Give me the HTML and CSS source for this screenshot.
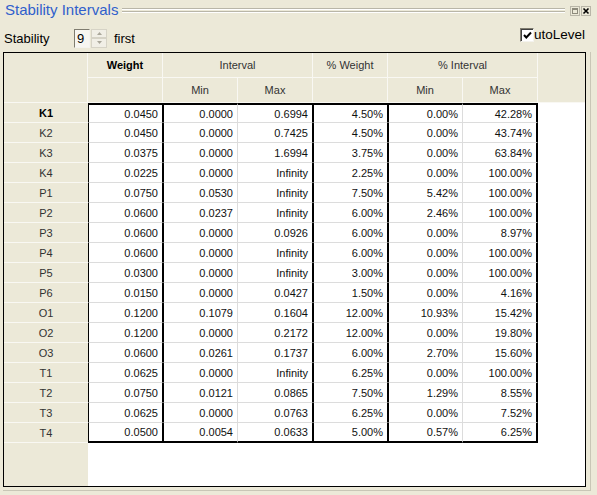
FILE: index.html
```html
<!DOCTYPE html>
<html>
<head>
<meta charset="utf-8">
<link rel="stylesheet" href="styles.css">
</head>
<body>
<div class="window">
  <div class="caption">
    <span class="cap-title">Stability Intervals</span>
    <span class="cap-lines"></span>
    <span class="cap-btn"><svg width="10" height="10" viewBox="0 0 10 10"><rect x="0.5" y="0.5" width="9" height="9" fill="#ece9d8" stroke="#b9b6a8"/><rect x="2.5" y="2.5" width="5" height="5" fill="none" stroke="#8d8a7c"/><line x1="2.5" y1="3.5" x2="7.5" y2="3.5" stroke="#8d8a7c"/></svg></span>
    <span class="cap-btn"><svg width="10" height="10" viewBox="0 0 10 10"><rect x="0.5" y="0.5" width="9" height="9" fill="#ece9d8" stroke="#b9b6a8"/><path d="M2.5 2.5 L7.5 7.5 M7.5 2.5 L2.5 7.5" stroke="#000" stroke-width="1.6"/></svg></span>
  </div>
  <div class="toolbar">
    <span class="tb-label">Stability</span>
    <span class="spin">
      <span class="spin-field">9</span>
      <span class="spin-btns">
        <span class="spin-btn"><svg width="5" height="3" viewBox="0 0 5 3"><path d="M0 3 L2.5 0 L5 3 Z" fill="#aaa79a"/></svg></span>
        <span class="spin-btn"><svg width="5" height="3" viewBox="0 0 5 3"><path d="M0 0 L2.5 3 L5 0 Z" fill="#aaa79a"/></svg></span>
      </span>
    </span>
    <span class="tb-first">first</span>
    <span class="check-wrap">
      <span class="check-box"><svg width="9" height="9" viewBox="0 0 9 9"><path d="M1 4 L3.3 6.5 L8 1.5" fill="none" stroke="#000" stroke-width="2"/></svg></span>
      <span class="check-label">utoLevel</span>
    </span>
  </div>
  <div class="panel">
  <div class="frame">
    <div class="grid">
      <div class="hc corner"></div>
      <div class="hc bold c2">Weight</div>
      <div class="hc span2">Interval</div>
      <div class="hc">% Weight</div>
      <div class="hc span2">% Interval</div>
      <div class="hc hfill"></div>
      <div class="hc"></div>
      <div class="hc">Min</div>
      <div class="hc">Max</div>
      <div class="hc"></div>
      <div class="hc">Min</div>
      <div class="hc">Max</div>

      <div class="rh first bold">K1</div><div class="dc first w">0.0450</div><div class="dc first mn">0.0000</div><div class="dc first mx">0.6994</div><div class="dc first w">4.50%</div><div class="dc first mn">0.00%</div><div class="dc first mx last">42.28%</div><div class="df"></div>
      <div class="rh">K2</div><div class="dc w">0.0450</div><div class="dc mn">0.0000</div><div class="dc mx">0.7425</div><div class="dc w">4.50%</div><div class="dc mn">0.00%</div><div class="dc mx last">43.74%</div><div class="df"></div>
      <div class="rh">K3</div><div class="dc w">0.0375</div><div class="dc mn">0.0000</div><div class="dc mx">1.6994</div><div class="dc w">3.75%</div><div class="dc mn">0.00%</div><div class="dc mx last">63.84%</div><div class="df"></div>
      <div class="rh">K4</div><div class="dc w">0.0225</div><div class="dc mn">0.0000</div><div class="dc mx">Infinity</div><div class="dc w">2.25%</div><div class="dc mn">0.00%</div><div class="dc mx last">100.00%</div><div class="df"></div>
      <div class="rh">P1</div><div class="dc w">0.0750</div><div class="dc mn">0.0530</div><div class="dc mx">Infinity</div><div class="dc w">7.50%</div><div class="dc mn">5.42%</div><div class="dc mx last">100.00%</div><div class="df"></div>
      <div class="rh">P2</div><div class="dc w">0.0600</div><div class="dc mn">0.0237</div><div class="dc mx">Infinity</div><div class="dc w">6.00%</div><div class="dc mn">2.46%</div><div class="dc mx last">100.00%</div><div class="df"></div>
      <div class="rh">P3</div><div class="dc w">0.0600</div><div class="dc mn">0.0000</div><div class="dc mx">0.0926</div><div class="dc w">6.00%</div><div class="dc mn">0.00%</div><div class="dc mx last">8.97%</div><div class="df"></div>
      <div class="rh">P4</div><div class="dc w">0.0600</div><div class="dc mn">0.0000</div><div class="dc mx">Infinity</div><div class="dc w">6.00%</div><div class="dc mn">0.00%</div><div class="dc mx last">100.00%</div><div class="df"></div>
      <div class="rh">P5</div><div class="dc w">0.0300</div><div class="dc mn">0.0000</div><div class="dc mx">Infinity</div><div class="dc w">3.00%</div><div class="dc mn">0.00%</div><div class="dc mx last">100.00%</div><div class="df"></div>
      <div class="rh">P6</div><div class="dc w">0.0150</div><div class="dc mn">0.0000</div><div class="dc mx">0.0427</div><div class="dc w">1.50%</div><div class="dc mn">0.00%</div><div class="dc mx last">4.16%</div><div class="df"></div>
      <div class="rh">O1</div><div class="dc w">0.1200</div><div class="dc mn">0.1079</div><div class="dc mx">0.1604</div><div class="dc w">12.00%</div><div class="dc mn">10.93%</div><div class="dc mx last">15.42%</div><div class="df"></div>
      <div class="rh">O2</div><div class="dc w">0.1200</div><div class="dc mn">0.0000</div><div class="dc mx">0.2172</div><div class="dc w">12.00%</div><div class="dc mn">0.00%</div><div class="dc mx last">19.80%</div><div class="df"></div>
      <div class="rh">O3</div><div class="dc w">0.0600</div><div class="dc mn">0.0261</div><div class="dc mx">0.1737</div><div class="dc w">6.00%</div><div class="dc mn">2.70%</div><div class="dc mx last">15.60%</div><div class="df"></div>
      <div class="rh">T1</div><div class="dc w">0.0625</div><div class="dc mn">0.0000</div><div class="dc mx">Infinity</div><div class="dc w">6.25%</div><div class="dc mn">0.00%</div><div class="dc mx last">100.00%</div><div class="df"></div>
      <div class="rh">T2</div><div class="dc w">0.0750</div><div class="dc mn">0.0121</div><div class="dc mx">0.0865</div><div class="dc w">7.50%</div><div class="dc mn">1.29%</div><div class="dc mx last">8.55%</div><div class="df"></div>
      <div class="rh">T3</div><div class="dc w">0.0625</div><div class="dc mn">0.0000</div><div class="dc mx">0.0763</div><div class="dc w">6.25%</div><div class="dc mn">0.00%</div><div class="dc mx last">7.52%</div><div class="df"></div>
      <div class="rh">T4</div><div class="dc end w">0.0500</div><div class="dc end mn">0.0054</div><div class="dc end mx">0.0633</div><div class="dc end w">5.00%</div><div class="dc end mn">0.57%</div><div class="dc end mx last">6.25%</div><div class="df"></div>

      <div class="rh-rest"></div>
      <div class="d-rest"></div>
    </div>
  </div>
  </div>
</div>
</body>
</html>
```

FILE: styles.css
```css
* { box-sizing: border-box; }
html, body { margin: 0; padding: 0; }
body {
  background: #ece9d8;
  font-family: "Liberation Sans", Arial, sans-serif;
  width: 597px;
  height: 495px;
  overflow: hidden;
}
.window { width: 597px; height: 495px; }

.caption {
  display: flex;
  align-items: center;
  height: 20px;
  padding: 0 6px 0 5px;
}
.cap-title {
  font-size: 15px;
  color: #3060cc;
  line-height: 20px;
  margin-right: 4px;
  margin-top: -1px;
}
.cap-lines {
  flex: 1;
  height: 6px;
  margin-right: 4px;
  margin-top: 1px;
  background: linear-gradient(to bottom,
    #b9b6a8 0, #b9b6a8 1px, #ffffff 1px, #ffffff 2px,
    transparent 2px, transparent 3px,
    #b9b6a8 3px, #b9b6a8 4px, #ffffff 4px, #ffffff 5px, transparent 5px);
}
.cap-btn {
  display: flex;
  width: 10px;
  height: 10px;
  margin-left: 1px;
  margin-top: 2px;
}

.toolbar {
  display: flex;
  align-items: center;
  height: 32px;
  padding: 0 12px 0 4px;
  font-size: 13px;
  color: #000;
}
.tb-label { width: 70px; padding-top: 4px; }
.spin { display: flex; height: 19px; margin-top: 4px; }
.spin-field {
  width: 16px;
  height: 19px;
  border-top: 1px solid #7f7c6f;
  border-left: 1px solid #7f7c6f;
  border-right: 1px solid #f4f3ee;
  border-bottom: 1px solid #f4f3ee;
  background: #f7f6f1;
  font-size: 13px;
  line-height: 17px;
  padding-left: 2px;
}
.spin-btns { display: flex; flex-direction: column; width: 16px; margin-left: 1px; }
.spin-btn {
  flex: 1;
  display: flex;
  align-items: center;
  justify-content: center;
  background: #f1efe6;
  border: 1px solid #d6d3c6;
}
.tb-first { margin-left: 7px; padding-top: 4px; }
.check-wrap {
  margin-left: auto;
  display: flex;
  align-items: center;
  align-self: flex-start;
  margin-top: 7px;
}
.check-box {
  width: 14px;
  height: 14px;
  background: #fff;
  border-top: 1px solid #7f7c6f;
  border-left: 1px solid #7f7c6f;
  border-right: 1px solid #f4f3ee;
  border-bottom: 1px solid #f4f3ee;
  box-shadow: inset 1px 1px 0 #404040;
  display: flex;
  align-items: center;
  justify-content: center;
  padding: 1px 0 0 1px;
}
.check-label { margin-left: 0; font-size: 13.5px; }

.panel {
  margin-left: 3px;
  width: 588px;
  height: 439px;
  border-right: 1px solid #c9c6b6;
  border-bottom: 1px solid #c9c6b6;
}
.frame {
  width: 583px;
  height: 435px;
  border: 1px solid #000;
  background: #fff;
}
.grid {
  display: grid;
  grid-template-columns: 84px repeat(6, 75px) 1fr;
  grid-template-rows: 25px 25px repeat(17, 20px) 1fr;
  height: 100%;
  font-size: 11px;
}
.hc {
  background: #ece9d8;
  border-right: 1px solid #f9f8f3;
  border-bottom: 1px solid #f9f8f3;
  display: flex;
  align-items: center;
  justify-content: center;
  color: #333;
}
.corner { grid-row: span 2; }
.span2 { grid-column: span 2; }
.hfill { grid-row: span 2; border-right: none; }
.bold { font-weight: bold; color: #000; }

.rh {
  background: #ece9d8;
  border-bottom: 1px solid #f9f8f3;
  display: flex;
  align-items: center;
  justify-content: center;
  color: #333;
}
.rh.bold { color: #000; }
.dc {
  background: #fff;
  border-bottom: 1px solid #dcdcdc;
  display: flex;
  align-items: center;
  justify-content: flex-end;
  padding-right: 4px;
  color: #111;
}
.dc.w { border-left: 1px solid #000; border-right: 1px solid #000; }
.dc.mn { border-left: 1px solid #000; border-right: 1px solid #dcdcdc; }
.dc.mx { border-right: 1px solid #000; }
.grid > .dc.w:nth-child(8n+2) { border-left-width: 2px; }
.dc.last { border-right-width: 2px; }
.dc.first { border-top: 2px solid #000; }
.dc.end { border-bottom: 2px solid #000; }
.df { background: #fff; }
.rh-rest { background: #ece9d8; }
.d-rest { grid-column: span 7; background: #fff; }
```
